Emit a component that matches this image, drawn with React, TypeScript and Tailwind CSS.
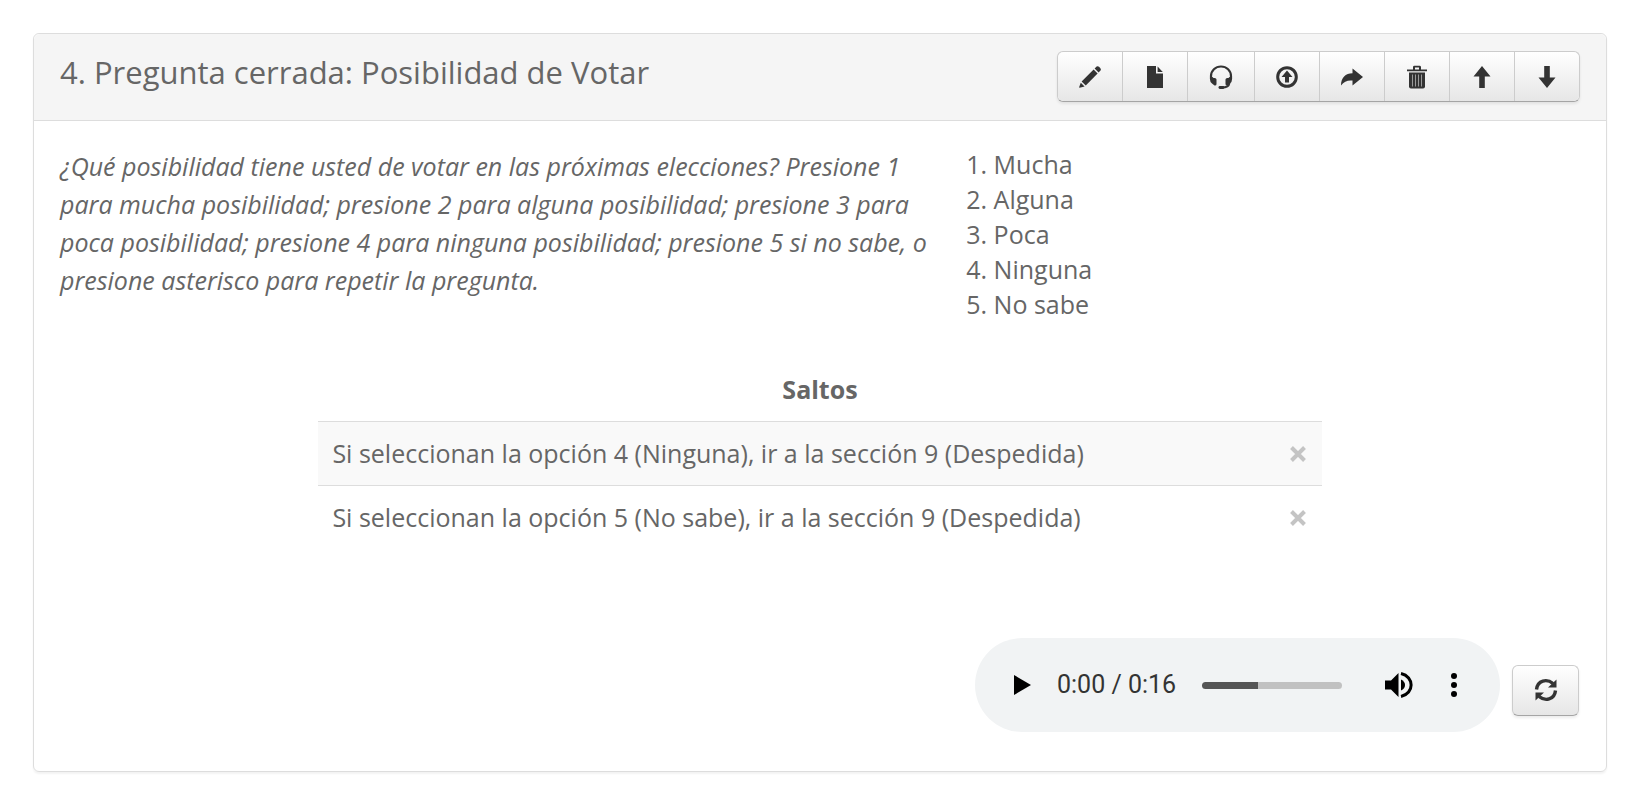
import type { ReactNode } from 'react';

const ICONS: Record<string, ReactNode> = {
  // 24x24 box, solid glyphs
  pencil: (
    <>
      <path d="M3.600 16.400 15.600 4.600 19.600 8.600 7.800 20.600Z" />
      <path d="M2.800 17.800 6.600 21.600 1.600 22.800Q1 22.800 1.200 22Z" />
      <path d="M16.600 3.600 18.600 1.600Q19.800 .8 21 1.800L22.400 3.200Q23.400 4.400 22.500 5.600L20.600 7.600Z" />
    </>
  ),
  file: <path d="M4 1H13V8.600H20V23H4ZM14.600 1.500 19.800 7H14.600Z" />,
  headset: (
    <>
      <path d="M2 14V11A10 9.500 0 0 1 22 11V14" fill="none" stroke="currentColor" strokeWidth="2.200" />
      <path d="M1 12H3.500L4.500 13Q7.500 12.500 7.500 14.500V19Q7.500 20.800 5.500 20.500L3 18.500Q1 17 1 14.500ZM23 12H20.500L19.500 13Q16.500 12.500 16.500 14.500V19Q16.500 20.800 18.500 20.500L21 18.500Q23 17 23 14.500Z" />
      <path d="M20.500 18C20 21.500 17.500 22.600 13 22.600" fill="none" stroke="currentColor" strokeWidth="1.800" />
      <rect x="9.500" y="21" width="6" height="3" rx="1.400" />
    </>
  ),
  upload: (
    <>
      <circle cx="12" cy="12" r="9.300" fill="none" stroke="currentColor" strokeWidth="3" />
      <path d="M12 5.500 17.500 12H14V17.500H10V12H6.500Z" />
    </>
  ),
  share: <path d="M1 20.500C1 12.500 5.500 8.200 12.500 8.200V3.500L23 12 12.500 20.500V15.500C7.500 15 4 16.500 1 20.500Z" />,
  trash: (
    <>
      <path d="M2 4.500H8V2.200Q8 .8 9.400 .8H14.600Q16 .8 16 2.200V4.500H22V6.300H2ZM10 4.500H14V2.600H10Z" fillRule="evenodd" />
      <path d="M4 7.500H20V21.500Q20 23.500 18 23.500H6Q4 23.500 4 21.500Z" />
      <path d="M7.500 9.500V21.500M10.500 9.500V21.500M13.500 9.500V21.500M16.500 9.500V21.500" stroke="#999" strokeWidth="1" />
    </>
  ),
  up: <path d="M12 1 20.500 11.500H14.800V23H9.200V11.500H3.500Z" />,
  down: <path d="M12 23 20.500 12.500H14.800V1H9.200V12.500H3.500Z" />,
  refresh: (
    <>
      <path d="M2.500 11.500C3.500 2 13 .5 19 5.500M21.500 12.500C20.500 22 11 23.500 5 18.500" fill="none" stroke="currentColor" strokeWidth="3.400" />
      <path d="M22.500 1.500V9.500H14ZM1.500 22.500V14.500H10Z" />
    </>
  ),
};

const ACTIONS = [
  { icon: 'pencil', label: 'Editar', size: 'h-6 w-6' },
  { icon: 'file', label: 'Duplicar', size: 'h-6 w-6' },
  { icon: 'headset', label: 'Grabar audio', size: 'h-6 w-[26px]' },
  { icon: 'upload', label: 'Subir audio', size: 'h-6 w-6' },
  { icon: 'share', label: 'Agregar salto', size: 'h-6 w-6' },
  { icon: 'trash', label: 'Eliminar', size: 'h-6 w-6' },
  { icon: 'up', label: 'Mover arriba', size: 'h-6 w-6' },
  { icon: 'down', label: 'Mover abajo', size: 'h-6 w-6' },
];

const OPTIONS = ['Mucha', 'Alguna', 'Poca', 'Ninguna', 'No sabe'];

const JUMPS = [
  'Si seleccionan la opción 4 (Ninguna), ir a la sección 9 (Despedida)',
  'Si seleccionan la opción 5 (No sabe), ir a la sección 9 (Despedida)',
];

function Icon({ name, size = 'h-6 w-6' }: { name: string; size?: string }) {
  return (
    <svg viewBox="0 0 24 24" className={`text-[#333] ${size}`} fill="currentColor" aria-hidden="true">
      {ICONS[name]}
    </svg>
  );
}

function AudioPlayer() {
  return (
    <div className="flex h-[94px] w-[525px] items-center rounded-full bg-[#f1f3f4] pr-[34px] pl-9 text-black">
      <button aria-label="Reproducir" className="flex size-6">
        <svg viewBox="0 0 24 24" className="size-6" fill="currentColor"><path d="M3 2 20 12 3 22Z" /></svg>
      </button>
      <span className="ml-[22px] font-[Roboto,sans-serif] text-[25px] leading-8 text-[#333]">0:00 / 0:16</span>
      <input
        type="range"
        aria-label="Posición"
        min={0}
        max={100}
        defaultValue={40}
        className="ml-[26px] h-[7px] w-[140px] appearance-none rounded-full bg-[linear-gradient(to_right,#555_40%,#c1c1c1_40%)] [&::-webkit-slider-thumb]:size-0 [&::-webkit-slider-thumb]:appearance-none"
      />
      <button aria-label="Silenciar" className="ml-auto flex">
        <svg viewBox="0 0 28 28" className="size-7" fill="currentColor">
          <path d="M0 9.500H6L13.500 2V26L6 18.500H0Z" />
          <path d="M16 8.500Q20 10.500 20 14T16 19.500Z" />
          <path d="M16 2.500C29.500 5.500 29.500 22.500 16 25.500" fill="none" stroke="currentColor" strokeWidth="3" />
        </svg>
      </button>
      <button aria-label="Más opciones" className="ml-[29px] flex">
        <svg viewBox="0 0 24 24" className="size-6" fill="currentColor">
          <circle cx="12" cy="3" r="3" />
          <circle cx="12" cy="12" r="3" />
          <circle cx="12" cy="21" r="3" />
        </svg>
      </button>
    </div>
  );
}

export default function App() {
  return (
    <main className="bg-white p-[33px] font-['Open_Sans',sans-serif] text-[25px] leading-[35px] text-[#666]">
      <section className="rounded-md border border-[#ddd] shadow-[0_2px_2px_rgba(0,0,0,0.05)]">
        <header className="flex items-start justify-between rounded-t-md border-b border-[#ddd] bg-[#f5f5f5] pt-[17px] pr-[26px] pb-[18px] pl-[26px]">
          <h2 className="text-[31px] leading-[42px]">4. Pregunta cerrada: Posibilidad de Votar</h2>
          <div className="flex rounded-md border border-[#ccc] border-b-[#a5a5a5] shadow-[0_2px_3px_rgba(0,0,0,0.08)]">
            {ACTIONS.map(a => (
              <button
                key={a.icon}
                aria-label={a.label}
                className="flex h-[49px] items-center justify-center border-l border-[#ccc] bg-linear-to-b from-white to-[#e6e6e6] px-5 first:rounded-l-md first:border-l-0 last:rounded-r-md"
              >
                <Icon name={a.icon} size={a.size} />
              </button>
            ))}
          </div>
        </header>

        <div className="px-[26px] pt-[26px] pb-[39px]">
          <div className="flex">
            <p className="w-[58%] leading-[38px] italic">
              ¿Qué posibilidad tiene usted de votar en las próximas elecciones? Presione 1 para mucha posibilidad; presione 2 para alguna posibilidad; presione 3 para poca posibilidad; presione 4 para ninguna posibilidad; presione 5 si no sabe, o presione asterisco para repetir la pregunta.
            </p>
            <ol className="list-decimal pl-[52px]">
              {OPTIONS.map(o => <li key={o}>{o}</li>)}
            </ol>
          </div>

          <table className="mx-auto mt-9 w-[66%] border-collapse">
            <thead>
              <tr><th colSpan={2} className="px-[14px] py-[14px] font-bold">Saltos</th></tr>
            </thead>
            <tbody>
              {JUMPS.map(j => (
                <tr key={j} className="border-t border-[#ddd] odd:bg-[#f9f9f9]">
                  <td className="px-[14px] py-[14px]">{j}</td>
                  <td className="w-12 pr-4">
                    <button aria-label="Eliminar salto" className="ml-auto flex">
                      <svg viewBox="0 0 16 16" className="size-4" fill="none" stroke="#c4c4c4" strokeWidth="4"><path d="M1.500 1.500 14.500 14.500M14.500 1.500 1.500 14.500" /></svg>
                    </button>
                  </td>
                </tr>
              ))}
            </tbody>
          </table>

          <div className="mt-[89px] flex items-center justify-end gap-3 pr-px">
            <AudioPlayer />
            <button
              aria-label="Regenerar audio"
              className="mt-[10px] flex h-[51px] w-[67px] items-center justify-center rounded-md border border-[#ccc] border-b-[#a5a5a5] bg-linear-to-b from-white to-[#e6e6e6] shadow-[0_2px_3px_rgba(0,0,0,0.08)]"
            >
              <Icon name="refresh" />
            </button>
          </div>
        </div>
      </section>
    </main>
  );
}
